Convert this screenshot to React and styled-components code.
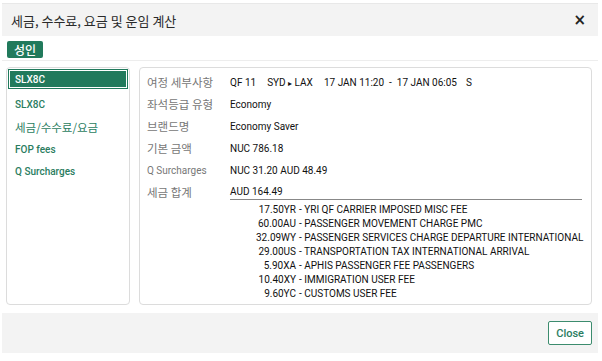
import React from 'react'
import styled, { createGlobalStyle } from 'styled-components'

const GlobalStyle = createGlobalStyle`
  body {
    margin: 0;
    background: #fff;
    font-family: Roboto, "Noto Sans CJK KR", sans-serif;
  }
`

const segments = ['SLX8C', 'SLX8C', '세금/수수료/요금', 'FOP fees', 'Q Surcharges']

const taxes = [
  ['17.50YR', 'YRI QF CARRIER IMPOSED MISC FEE'],
  ['60.00AU', 'PASSENGER MOVEMENT CHARGE PMC'],
  ['32.09WY', 'PASSENGER SERVICES CHARGE DEPARTURE INTERNATIONAL'],
  ['29.00US', 'TRANSPORTATION TAX INTERNATIONAL ARRIVAL'],
  ['5.90XA', 'APHIS PASSENGER FEE PASSENGERS'],
  ['10.40XY', 'IMMIGRATION USER FEE'],
  ['9.60YC', 'CUSTOMS USER FEE'],
]

const App = () => {
  return (
    <Page>
      <GlobalStyle />
      <Modal>
        <Header>
          <Title>세금, 수수료, 요금 및 운임 계산</Title>
          <CloseX>×</CloseX>
        </Header>
        <BadgeRow>
          <Badge>성인</Badge>
        </BadgeRow>
        <Body>
          <SideList>
            {segments.map((s, i) => (
              <SideItem key={i} active={i === 0} korean={i === 2}>{s}</SideItem>
            ))}
          </SideList>
          <Detail>
            <Row>
              <Label>여정 세부사항</Label>
              <Value>
                <Gap space={11}>QF 11</Gap>
                <Gap space={11}>SYD <Arrow>▸</Arrow> LAX</Gap>
                <Gap space={9}>17 JAN 11:20 &nbsp;-&nbsp; 17 JAN 06:05</Gap>
                S
              </Value>
            </Row>
            <Row>
              <Label>좌석등급 유형</Label>
              <Value>Economy</Value>
            </Row>
            <Row>
              <Label>브랜드명</Label>
              <Value>Economy Saver</Value>
            </Row>
            <Row>
              <Label>기본 금액</Label>
              <Value>NUC 786.18</Value>
            </Row>
            <Row>
              <Label latin>Q Surcharges</Label>
              <Value>NUC 31.20 AUD 48.49</Value>
            </Row>
            <Row>
              <Label>세금 합계</Label>
              <Value underline>AUD 164.49</Value>
            </Row>
            <TaxTable>
              {taxes.map(([amt, desc]) => (
                <React.Fragment key={amt}>
                  <Amount>{amt}</Amount>
                  <Desc>- {desc}</Desc>
                </React.Fragment>
              ))}
            </TaxTable>
          </Detail>
        </Body>
        <Footer>
          <CloseButton>Close</CloseButton>
        </Footer>
      </Modal>
    </Page>
  )
}

const Page = styled.div`
  width: 602px;
  height: 361px;
  overflow: hidden;
  background: #fff;
`

const Modal = styled.div`
  margin: 3px 4px 0 2px;
  border-top: 1px solid #e8e8e8;
`

const Header = styled.div`
  display: flex;
  align-items: center;
  justify-content: space-between;
  height: 32px;
  padding: 0 12px 0 9px;
  background: #f3f3f3;
`

const Title = styled.div`
  font-family: "Noto Sans CJK KR", sans-serif;
  font-size: 13px;
  color: #2a2a2a;
`

const CloseX = styled.div`
  font-family: "DejaVu Sans", sans-serif;
  font-size: 15px;
  font-weight: bold;
  color: #222;
`

const BadgeRow = styled.div`
  height: 25px;
  padding: 4px 0 0 5px;
  box-sizing: border-box;
  border-bottom: 1px solid #ededed;
`

const Badge = styled.span`
  display: inline-block;
  background: #217a5c;
  color: #fff;
  font-family: "Noto Sans CJK KR", sans-serif;
  font-size: 12px;
  font-weight: 500;
  line-height: 17px;
  padding: 0 7px;
  border-radius: 2px;
`

const Body = styled.div`
  display: flex;
  gap: 9px;
  padding: 6px 6px 0 4px;
`

const Panel = styled.div`
  height: 238px;
  box-sizing: border-box;
  border: 1px solid #dcdcdc;
  border-radius: 4px;
  background: #fff;
`

const SideList = styled(Panel)`
  width: 124px;
  flex-shrink: 0;
  padding: 1px;
  display: flex;
  flex-direction: column;
`

const SideItem = styled.div`
  height: ${p => (p.active ? '18px' : p.korean ? '23px' : '22px')};
  margin-bottom: ${p => (p.active ? '4px' : '0')};
  flex-shrink: 0;
  display: flex;
  align-items: center;
  padding-left: ${p => (p.active ? '6px' : '7px')};
  font-size: ${p => (p.korean ? '11.5px' : '10px')};
  font-family: ${p => (p.korean ? '"Noto Sans CJK KR", sans-serif' : 'Roboto, sans-serif')};
  font-weight: ${p => (p.korean ? 'normal' : '500')};
  color: ${p => (p.active ? '#fff' : '#2b7d5f')};
  background: ${p => (p.active ? '#217a5c' : 'transparent')};
  outline: ${p => (p.active ? '1px solid #fff' : 'none')};
  outline-offset: -2px;
  border: ${p => (p.active ? '1px solid #217a5c' : 'none')};
`

const Detail = styled(Panel)`
  flex: 1;
  min-width: 0;
  padding: 3px 9px 0 7px;
`

const Row = styled.div`
  display: flex;
  align-items: center;
  height: 22px;
`

const Label = styled.div`
  width: 83px;
  flex-shrink: 0;
  font-family: ${p => (p.latin ? 'Roboto, sans-serif' : '"Noto Sans CJK KR", sans-serif')};
  font-size: ${p => (p.latin ? '10px' : '11.5px')};
  color: #777;
`

const Value = styled.div`
  flex: 1;
  font-size: 10px;
  color: #111;
  white-space: nowrap;
  padding-bottom: ${p => (p.underline ? '2px' : '0')};
  border-bottom: ${p => (p.underline ? '1px solid #888' : 'none')};
  margin-top: ${p => (p.underline ? '2px' : '0')};
`

const Gap = styled.span`
  margin-right: ${p => p.space}px;
`

const Arrow = styled.span`
  font-size: 8px;
`

const TaxTable = styled.div`
  display: grid;
  grid-template-columns: 149px 1fr;
  column-gap: 3px;
  font-size: 10px;
  color: #111;
  line-height: 14px;
  white-space: nowrap;
`

const Amount = styled.div`
  text-align: right;
`

const Desc = styled.div``

const Footer = styled.div`
  margin-top: 8px;
  height: 40px;
  background: #f3f3f3;
  display: flex;
  align-items: center;
  justify-content: flex-end;
  padding-right: 6px;
`

const CloseButton = styled.button`
  height: 24px;
  padding: 0 7px;
  background: #fff;
  border: 1px solid #3c8c6e;
  border-radius: 2px;
  color: #2b7d5f;
  font-family: Roboto, sans-serif;
  font-size: 11px;
  font-weight: 500;
`

export default App
